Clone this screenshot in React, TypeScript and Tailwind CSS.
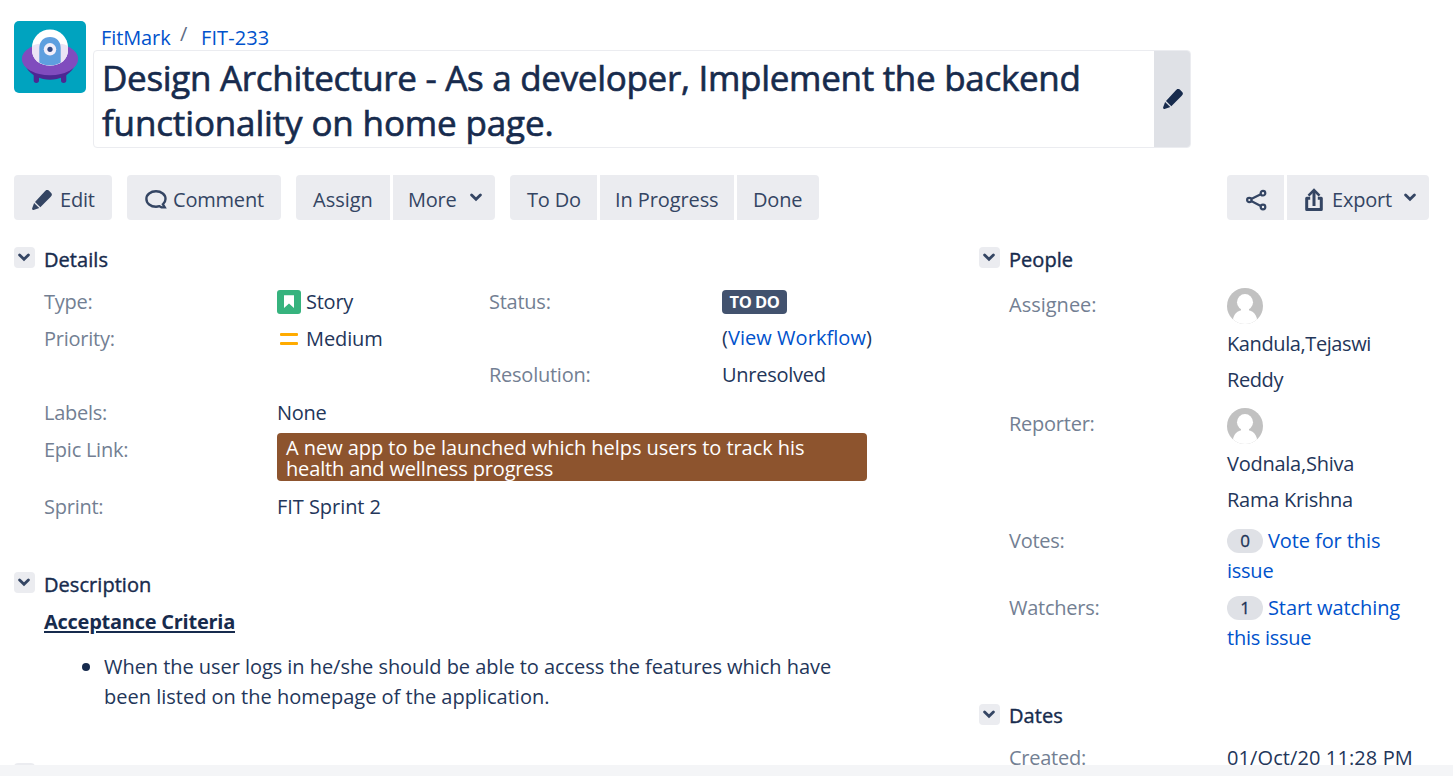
import type { ReactNode } from "react";

function PencilIcon({ className = "" }: { className?: string }) {
  return (
    <svg viewBox="0 0 20 20" className={`h-5 w-5 shrink-0 ${className}`} fill="currentColor">
      <path d="M12.900 1.200 14 .3c.9-.6 2-.5 2.800.3l2.400 2.400c.8.8.9 1.900.3 2.800l-1 1.100L8.300 17.200 3 12Z" />
      <path d="M2.100 12.900 7.300 18 1.600 20C.6 20.200-.1 19.500.1 18.500Z" />
    </svg>
  );
}

function CommentIcon() {
  return (
    <svg viewBox="0 0 22 19" className="h-[19px] w-[22px] shrink-0" fill="none" stroke="currentColor" strokeWidth="2.400">
      <path d="M11 1.300c5.400 0 9.500 3.300 9.500 7.600 0 2.300-1 4-2.600 5.400l1.800 3.100h-3.200l-2-1.200c-1.100.3-2.300.500-3.500.500-5.400 0-9.600-3.400-9.600-7.800S5.600 1.300 11 1.300Z" />
    </svg>
  );
}

function ChevronIcon({ className = "" }: { className?: string }) {
  return (
    <svg viewBox="0 0 12 9" className={`h-[9px] w-3 shrink-0 ${className}`} fill="none" stroke="currentColor" strokeWidth="2.800" strokeLinecap="round" strokeLinejoin="miter">
      <path d="M1.600 2 6 6.300 10.400 2" />
    </svg>
  );
}

function ShareIcon() {
  return (
    <svg viewBox="0 0 22 22" className="h-[22px] w-[22px]" fill="none" stroke="currentColor" strokeWidth="2.200">
      <circle cx="4.300" cy="11" r="2.200" />
      <circle cx="18" cy="4.200" r="2.300" />
      <circle cx="18" cy="18" r="2.300" />
      <path d="m6.200 9.900 9.600-4.700M6.200 12.100l9.600 4.800" />
    </svg>
  );
}

function ExportIcon() {
  return (
    <svg viewBox="0 0 20 24" className="h-6 w-5 shrink-0" fill="none" stroke="currentColor" strokeWidth="3" strokeLinecap="butt">
      <path d="M6.200 10.200H2.700v11.200h14.600V10.200h-3.500" strokeLinejoin="round" />
      <path d="M10 18V3.500" />
      <path d="M4.500 7.600 10 2l5.500 5.600" strokeWidth="2.600" />
    </svg>
  );
}

function ProjectAvatar() {
  return (
    <svg viewBox="0 0 72 72" className="h-[72px] w-[72px] shrink-0 rounded-[5px]">
      <rect width="72" height="72" fill="#00a3bf" />
      <path d="M19.700 52h5.300v7.500a2.600 2.400 0 0 1-5.300 0ZM47 52h5.300v7.500a2.600 2.400 0 0 1-5.300 0Z" fill="#4c2893" />
      <path d="M12 46c5 9 15 12.700 24 12.700S55 55 60 46Z" fill="#4c2893" />
      <ellipse cx="36" cy="38" rx="28.200" ry="16.300" fill="#804cbe" />
      <path d="M18 26.500a18 18 0 0 1 36 0V29c0 9-7 15.500-18 15.500S18 38 18 29Z" fill="#fff" />
      <path d="M18 25c4-2.200 11-3 18-3s14 .8 18 3v4c0 9-7 15.500-18 15.500S18 38 18 29Z" fill="#ebe3f5" />
      <path d="M25.300 27c0-6.500 4.200-11 10.700-11s10.700 4.500 10.700 11v14.500C43.500 43.500 40 44.300 36 44.300s-7.500-.8-10.700-2.800Z" fill="#5e9fdf" />
      <circle cx="36" cy="28.300" r="6.200" fill="#f3effa" />
      <circle cx="36" cy="28.300" r="2.600" fill="#344b86" />
    </svg>
  );
}

function UserAvatar() {
  return (
    <svg viewBox="0 0 36 36" className="-mt-px block h-9 w-9 rounded-full">
      <rect width="36" height="36" fill="#c1c1c1" />
      <ellipse cx="18" cy="14.300" rx="8" ry="8.200" fill="#fff" />
      <path d="M14 20h8v3h-8Z" fill="#fff" />
      <path d="M5.500 36c0-9.500 4.500-14.200 12.500-14.200S30.500 26.500 30.500 36Z" fill="#fff" />
    </svg>
  );
}

function Button({ className = "", children }: { className?: string; children: ReactNode }) {
  return (
    <button className={`flex h-[45px] items-center bg-[#ebecf0] pt-1 text-[#344563] ${className}`}>{children}</button>
  );
}

function SectionTitle({ children }: { children: ReactNode }) {
  return (
    <div className="flex h-[30px] items-start">
      <span className="mt-[3px] mr-[9px] flex h-[21px] w-[21px] items-center justify-center rounded-[4px] bg-[#ebecf0] pr-px text-[#344563]">
        <ChevronIcon />
      </span>
      <h2 className="pt-px text-[20px] tracking-[0.05px] text-[#172b4d] [-webkit-text-stroke:0.4px_#172b4d]">{children}</h2>
    </div>
  );
}

function Row({ label, className, children }: { label: string; className: string; children?: ReactNode }) {
  return (
    <div className={`flex items-start ${className}`}>
      <dt className="shrink-0 text-[#737f93]">{label}</dt>
      <dd className="min-w-0">{children}</dd>
    </div>
  );
}

const link = "text-[#0052cc]";

export default function App() {
  return (
    <div className="flex h-screen flex-col overflow-hidden bg-[#f4f5f7] pb-[11px] font-['Open_Sans','Noto_Sans',sans-serif] text-[20px] leading-[30px] tracking-[-0.25px] text-[#172b4d]">
      <div className="min-h-0 flex-1 overflow-hidden bg-white pl-[14px]">
        <header className="flex h-[154px] pt-[21px]">
          <ProjectAvatar />
          <div className="ml-[7px] w-[1098px]">
            <nav className="flex h-[29px] items-start pl-2">
              <a className={`w-[79px] pt-[2px] tracking-[-0.1px] ${link}`}>FitMark</a>
              <span className="-mt-[2px] w-[21px] text-[#5e6c84]">/</span>
              <a className={`pt-[2px] tracking-[0.1px] ${link}`}>FIT-233</a>
            </nav>
            <div className="flex h-[98px] overflow-hidden rounded-[4px] border border-[#ebecf0]">
              <h1 className="flex-1 pt-[4px] pl-[8px] text-[35px] leading-[45px] tracking-[-0.3px] whitespace-nowrap [-webkit-text-stroke:0.65px_#172b4d]">
                Design Architecture - As a developer, Implement the backend
                <br />
                <span className="tracking-[-0.15px]">functionality on home page.</span>
              </h1>
              <button className="flex w-9 items-center justify-center bg-[#dfe1e6] pl-px">
                <PencilIcon />
              </button>
            </div>
          </div>
        </header>

        <div className="mt-[21px] flex h-[45px] w-[1415px] tracking-[-0.2px] whitespace-nowrap">
          <Button className="w-[98px] rounded-[4px] pl-[18px]">
            <PencilIcon className="mr-2" />
            Edit
          </Button>
          <Button className="ml-[15px] w-[154px] rounded-[4px] pl-[18px]">
            <span className="mr-[6px]"><CommentIcon /></span>
            Comment
          </Button>
          <Button className="ml-[15px] w-[94px] rounded-l-[4px] pl-[17px] tracking-[0px]">Assign</Button>
          <Button className="ml-[3px] w-[102px] justify-between rounded-r-[4px] pr-[13px] pl-[15px]">
            More
            <ChevronIcon className="-mt-[5px]" />
          </Button>
          <Button className="ml-[15px] w-[87px] rounded-l-[4px] pl-[17px]">To Do</Button>
          <Button className="ml-[3px] w-[134px] pl-[15px] tracking-[-0.1px]">In Progress</Button>
          <Button className="ml-[3px] w-[82px] rounded-r-[4px] pl-[16px]">Done</Button>
          <Button className="ml-auto w-[57px] justify-center rounded-l-[4px]"><ShareIcon /></Button>
          <Button className="ml-[3px] w-[142px] rounded-r-[4px] pr-[13px] pl-[17px]">
            <ExportIcon />
            <span className="ml-2">Export</span>
            <ChevronIcon className="-mt-[5px] ml-auto" />
          </Button>
        </div>

        <div className="flex pt-6 text-[#23365a]">
          <main className="w-[965px]">
            <section className="h-[325px]">
              <SectionTitle>Details</SectionTitle>
              <div className="flex pt-[13px] pl-[30px]">
                <dl className="w-[445px] [&_dt]:w-[233px]">
                  <Row label="Type:" className="h-[37px]">
                    <span className="flex">
                      <svg viewBox="0 0 24 24" className="mt-[3px] mr-[5px] h-6 w-6">
                        <rect width="24" height="24" rx="3" fill="#36b37e" />
                        <path d="M7 5.300h10V18l-5-4.500L7 18Z" fill="#fff" />
                      </svg>
                      Story
                    </span>
                  </Row>
                  <Row label="Priority:" className="h-[37px]">
                    <span className="flex">
                      <svg viewBox="0 0 24 24" className="mt-[3px] mr-[5px] h-6 w-6">
                        <rect x="3" y="6" width="18" height="3" rx="1" fill="#ffab00" />
                        <rect x="3" y="15" width="18" height="3" rx="1" fill="#ffab00" />
                      </svg>
                      <span className="tracking-[-0.1px]">Medium</span>
                    </span>
                  </Row>
                </dl>
                <dl className="h-[111px] [&_dt]:w-[233px]">
                  <Row label="Status:" className="h-[73px]">
                    <span className="mt-[3px] flex h-6 w-[65px] items-center justify-center rounded-[4px] bg-[#42526e] text-[16.500px] font-bold tracking-[-0.5px] text-white">TO DO</span>
                    <span className="mt-[9px] block tracking-[0.05px]">(<a className={link}>View Workflow</a>)</span>
                  </Row>
                  <Row label="Resolution:" className="h-[38px]">Unresolved</Row>
                </dl>
              </div>
              <dl className="pl-[30px] [&_dt]:w-[233px]">
                <Row label="Labels:" className="h-[37px]">None</Row>
                <Row label="Epic Link:" className="h-[57px]">
                  <a className="-mt-[2px] block h-12 w-[590px] rounded-[4px] bg-[#8d542e] px-[9px] pt-[4px] leading-[21px] tracking-[-0.050px] text-white">
                    A new app to be launched which helps users to track his
                    <br />
                    <span className="tracking-[-0.150px]">health and wellness progress</span>
                  </a>
                </Row>
                <Row label="Sprint:" className="h-[30px]"><span className="tracking-[-0.050px]">FIT Sprint 2</span></Row>
              </dl>
            </section>
            <section className="h-[191px]">
              <SectionTitle>Description</SectionTitle>
              <div className="pt-[8px] pl-[30px]">
                <p className="font-bold text-[#172b4d] underline decoration-2 underline-offset-[2px]">Acceptance Criteria</p>
                <ul className="mt-[15px] flex pl-[38px] tracking-[-0.050px]">
                  <li className="flex">
                    <span className="mt-[11px] mr-[14px] h-2 w-2 rounded-full bg-[#172b4d]" />
                    <span>
                      When the user logs in he/she should be able to access the features which have
                      <br />
                      <span className="tracking-[0px]">been listed on the homepage of the application.</span>
                    </span>
                  </li>
                </ul>
              </div>
            </section>
            <SectionTitle>Attachments</SectionTitle>
          </main>

          <aside className="w-[470px]">
            <section className="h-[457px]">
              <SectionTitle>People</SectionTitle>
              <dl className="pt-[15px] pl-[30px] [&_dt]:w-[218px]">
                <Row label="Assignee:" className="h-[120px] [&>dt]:pt-px [&>dt]:tracking-[0px]">
                  <UserAvatar />
                  <span className="mt-[2px] block leading-9 tracking-[-0.4px]">Kandula,Tejaswi<br />Reddy</span>
                </Row>
                <Row label="Reporter:" className="h-[117px]">
                  <UserAvatar />
                  <span className="mt-[2px] block leading-9 tracking-[-0.25px]">Vodnala,Shiva<br />Rama Krishna</span>
                </Row>
                <Row label="Votes:" className="h-[67px]">
                  <div className="flex tracking-[-0.1px]">
                    <span className="mt-[3px] mr-[5px] flex h-6 w-9 items-center justify-center rounded-full bg-[#dfe1e6] text-[17px] [-webkit-text-stroke:0.3px_#172b4d]">0</span>
                    <a className={link}>Vote for this</a>
                  </div>
                  <a className={link}>issue</a>
                </Row>
                <Row label="Watchers:" className="h-[67px]">
                  <div className="flex tracking-[-0.1px]">
                    <span className="mt-[3px] mr-[5px] flex h-6 w-9 items-center justify-center rounded-full bg-[#dfe1e6] text-[17px] [-webkit-text-stroke:0.3px_#172b4d]">1</span>
                    <a className={link}>Start watching</a>
                  </div>
                  <a className={link}>this issue</a>
                </Row>
              </dl>
            </section>
            <section className="[&_h2]:pt-0">
              <SectionTitle>Dates</SectionTitle>
              <dl className="pt-3 pl-[30px] [&_dt]:w-[218px]">
                <Row label="Created:" className="h-[30px]"><span className="tracking-[0.1px]">01/Oct/20 11:28 PM</span></Row>
              </dl>
            </section>
          </aside>
        </div>
      </div>
    </div>
  );
}
